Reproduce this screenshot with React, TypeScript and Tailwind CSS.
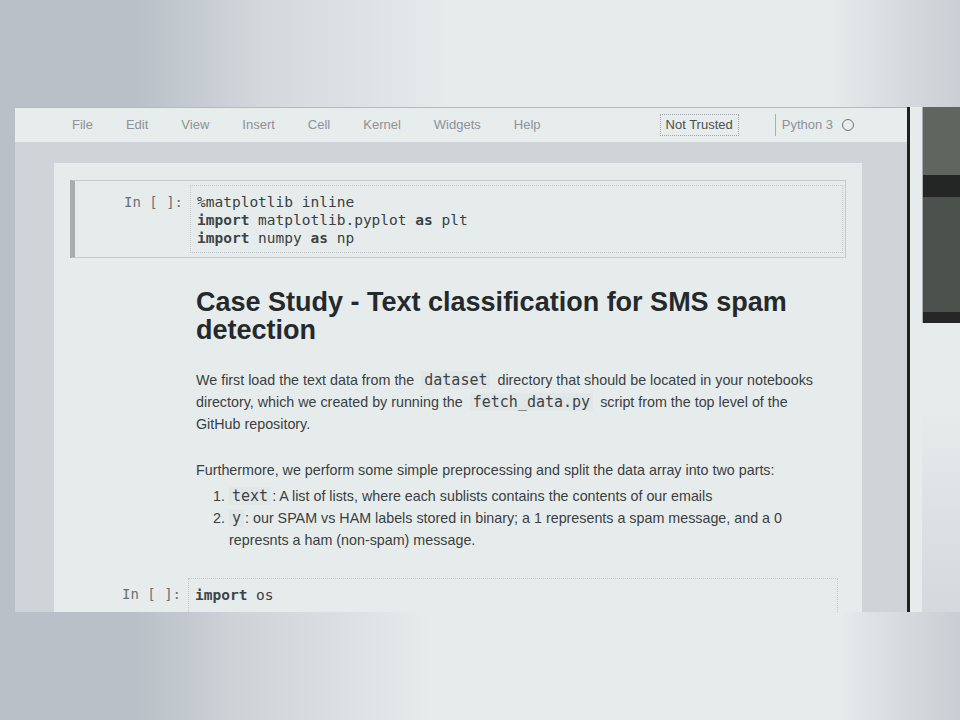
import React from "react";

const menu = ["File", "Edit", "View", "Insert", "Cell", "Kernel", "Widgets", "Help"];

function Prompt() {
  return (
    <div className="w-[115px] shrink-0 pr-[7px] text-right font-['DejaVu_Sans_Mono',monospace] text-[14px] leading-[18px] text-[#6b7175] pt-[8px]">
      In&nbsp;[&nbsp;]:
    </div>
  );
}

function Code({ children, tight }: { children: React.ReactNode; tight?: boolean }) {
  return (
    <code
      className={`${tight ? "mr-[1px]" : "mx-[7px]"} rounded-[2px] bg-[#e1e7e7] px-[3px] font-['DejaVu_Sans_Mono',monospace] text-[15px] text-[#3d4245]`}
    >
      {children}
    </code>
  );
}

export default function App() {
  return (
    <div className="flex h-[720px] w-[960px] flex-col overflow-hidden bg-[#e6ecec] font-['Liberation_Sans',Arial,sans-serif]">
      {/* top strip */}
      <div className="h-[107px] shrink-0 bg-[linear-gradient(to_right,#b9c0c7_135px,#d2d8dc_260px,#e6ecec_450px,#e6ecec_830px,#d6dbde_900px,#c9cfd4_960px)]" />

      {/* middle row */}
      <div className="flex h-[505px] shrink-0">
        <div className="w-[15px] shrink-0 bg-[#b9c0c7]" />

        {/* notebook window */}
        <div className="flex w-[892px] shrink-0 flex-col">
          <div className="flex h-[35px] shrink-0 items-center border-t border-[#b4bbc0] bg-[#e7ecec] pl-[57px] text-[13px]">
            <div className="flex gap-[33px] text-[#8d9398]">
              {menu.map((m) => (
                <span key={m}>{m}</span>
              ))}
            </div>
            <div className="ml-[119px] flex h-[22px] items-center border border-dotted border-[#9fa5aa] px-[5px] text-[#4b5053]">
              Not Trusted
            </div>
            <div className="ml-[36px] h-[22px] w-px bg-[#a9afb3]" />
            <span className="ml-[6px] text-[#8d9398]">Python 3</span>
            <div className="ml-[9px] h-[12px] w-[12px] rounded-full border-[1.5px] border-[#6f7478]" />
          </div>

          <div className="flex flex-1 overflow-hidden bg-[#ced4d8] pl-[39px] pt-[21px]">
            {/* page */}
            <div className="w-[808px] shrink-0 bg-[#e6ecec] px-[16px] pt-[17px] text-[14.3px] text-[#3a3e41]">
              {/* cell 1 (selected) */}
              <div className="flex h-[78px] border border-l-[5px] border-[#c3c9cd] border-l-[#a7aeb3] py-[4px] pr-[2px]">
                <Prompt />
                <div className="flex-1 border border-dotted border-[#c3c8cc] px-[6px] py-[7px] font-['DejaVu_Sans_Mono',monospace] text-[14.5px] leading-[18px] text-[#3a3f42]">
                  <div>%matplotlib inline</div>
                  <div>
                    <b className="text-[#3d4346]">import</b> matplotlib.pyplot <b className="text-[#3d4346]">as</b> plt
                  </div>
                  <div>
                    <b className="text-[#3d4346]">import</b> numpy <b className="text-[#3d4346]">as</b> np
                  </div>
                </div>
              </div>

              {/* markdown cell */}
              <div className="pl-[126px]">
                <h1 className="mt-[30px] text-[27px] font-bold leading-[28px] text-[#25292b]">
                  Case Study - Text classification for SMS spam
                  <br />
                  detection
                </h1>
                <p className="mt-[25px] whitespace-nowrap leading-[22px]">
                  We first load the text data from the<Code>dataset</Code>directory that should be located in your notebooks
                  <br />
                  directory, which we created by running the<Code>fetch_data.py</Code>script from the top level of the
                  <br />
                  GitHub repository.
                </p>
                <p className="mt-[24px] whitespace-nowrap leading-[22px]">
                  Furthermore, we perform some simple preprocessing and split the data array into two parts:
                </p>
                <ol className="mt-[4px] pl-[17px] leading-[22px]">
                  <li className="flex">
                    <span className="w-[16px] shrink-0">1.</span>
                    <span className="whitespace-nowrap">
                      <Code tight>text</Code>: A list of lists, where each sublists contains the contents of our emails
                    </span>
                  </li>
                  <li className="flex">
                    <span className="w-[16px] shrink-0">2.</span>
                    <span className="whitespace-nowrap">
                      <Code tight>y</Code>: our SPAM vs HAM labels stored in binary; a 1 represents a spam message, and a 0
                      <br />
                      represnts a ham (non-spam) message.
                    </span>
                  </li>
                </ol>
              </div>

              {/* cell 2 */}
              <div className="mt-[26px] flex border border-l-[5px] border-transparent pr-[7px]">
                <div className="w-[113px] shrink-0 pr-[7px] pt-[7px] text-right font-['DejaVu_Sans_Mono',monospace] text-[14px] leading-[18px] text-[#6b7175]">
                  In&nbsp;[&nbsp;]:
                </div>
                <div className="h-[40px] flex-1 border border-dotted border-[#c3c8cc] px-[6px] py-[7px] font-['DejaVu_Sans_Mono',monospace] text-[14.5px] leading-[18px] text-[#3a3f42]">
                  <b className="text-[#3d4346]">import</b> os
                </div>
              </div>
            </div>
          </div>
        </div>

        {/* scrollbar edge */}
        <div className="w-[3px] shrink-0 bg-[#1f2220]" />
        <div className="w-[12px] shrink-0" />

        {/* neighbouring window */}
        <div className="flex w-[38px] shrink-0 flex-col bg-[linear-gradient(to_bottom,#e6ecec_0px,#e6ecec_300px,#d3d9dc_505px)]">
          <div className="h-[68px] border-l border-[#a8adb0] bg-[#60655f]" />
          <div className="h-[22px] border-l border-[#a8adb0] bg-[#232624]" />
          <div className="h-[115px] border-l border-[#a8adb0] bg-[#4c514d]" />
          <div className="h-[11px] border-l border-[#a8adb0] bg-[#242725]" />
        </div>
      </div>

      {/* bottom strip */}
      <div className="flex-1 bg-[linear-gradient(to_right,#b9c0c7_135px,#ccd2d6_230px,#d9dee1_330px,#e6ecec_430px,#e6ecec_840px,#d3d9dc_910px,#c8ced3_960px)]" />
    </div>
  );
}
